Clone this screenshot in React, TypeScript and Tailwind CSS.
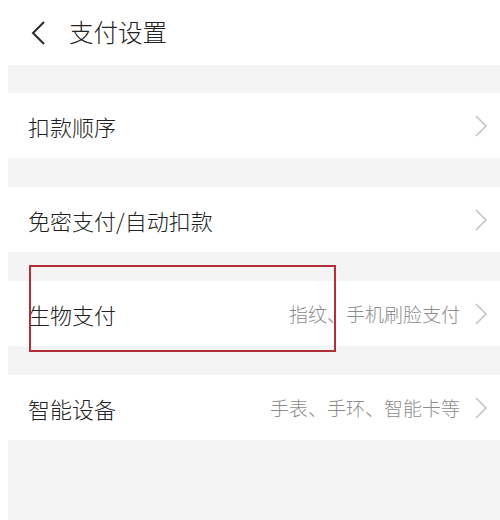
const ROWS = [
  { label: '扣款顺序', hint: '' },
  { label: '免密支付/自动扣款', hint: '' },
  { label: '生物支付', hint: '指纹、手机刷脸支付' },
  { label: '智能设备', hint: '手表、手环、智能卡等' },
]

function Chevron() {
  return (
    <svg width="14" height="24" viewBox="0 0 14 24" className="shrink-0">
      <polyline points="2,2 12,12 2,22" fill="none" stroke="#c4c4c4" strokeWidth="1.6" />
    </svg>
  )
}

export default function App() {
  return (
    <div
      className="relative w-[500px] h-[520px] bg-white flex flex-col overflow-hidden"
      style={{ fontFamily: '"Noto Sans CJK SC", "Noto Sans", sans-serif' }}
    >
      {/* Header */}
      <header className="h-[65px] shrink-0 flex items-center pl-[30px]">
        <svg width="18" height="26" viewBox="0 0 18 26">
          <polyline points="14,2 3,13 14,24" fill="none" stroke="#2a2a2a" strokeWidth="2" />
        </svg>
        <h1 className="ml-[21px] text-[24.5px] font-light leading-none text-[#222]">支付设置</h1>
      </header>

      {/* List */}
      <main className="flex-1 ml-[8px] bg-[#f4f4f4] flex flex-col pt-[28px] gap-[29px]">
        {ROWS.map(r => (
          <div key={r.label} className="h-[65px] bg-white flex items-center pl-[20px] pr-[12px]">
            <span className="text-[22px] font-light text-[#222] leading-none">{r.label}</span>
            <span className="ml-auto mr-[14px] text-[19px] font-light text-[#8c8c8c] leading-none">{r.hint}</span>
            <Chevron />
          </div>
        ))}
      </main>

      {/* Annotation box */}
      <div className="absolute left-[29px] top-[265px] w-[307px] h-[87px] border-[2.5px] border-[#b0303a]" />
    </div>
  )
}
